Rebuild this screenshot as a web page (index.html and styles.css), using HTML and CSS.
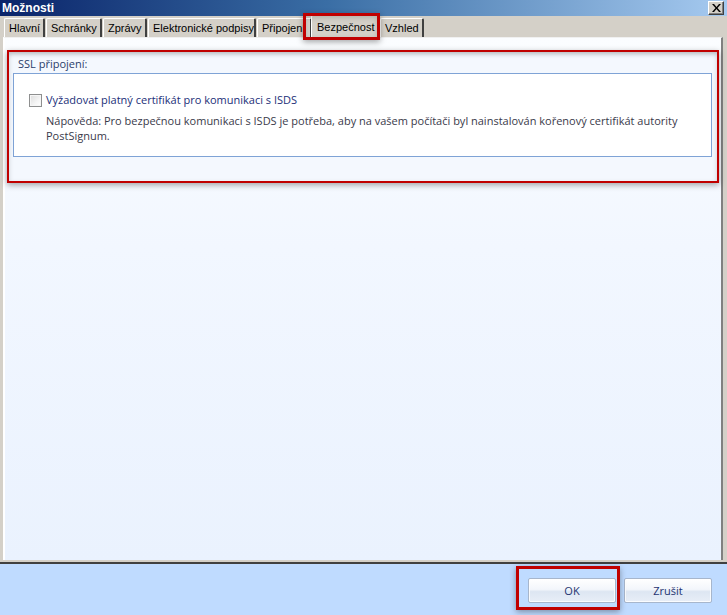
FILE: index.html
```html
<!DOCTYPE html>
<html lang="cs">
<head>
<meta charset="utf-8">
<title>Možnosti</title>
<link rel="stylesheet" href="styles.css">
</head>
<body>
<div class="window">
  <div class="titlebar">
    <span class="title">Možnosti</span>
    <span class="close">
      <svg width="9" height="8" viewBox="0 0 9 8"><path d="M0 0h2l2.5 3 2.5-3h2L5.5 4 9 8H7L4.5 5 2 8H0l3.5-4z" fill="#000"/></svg>
    </span>
  </div>
  <div class="tabs">
    <div class="tab">Hlavní</div>
    <div class="tab">Schránky</div>
    <div class="tab">Zprávy</div>
    <div class="tab">Elektronické podpisy</div>
    <div class="tab">Připojení</div>
    <div class="tab active">Bezpečnost<span class="mark mark-tab"></span></div>
    <div class="tab">Vzhled</div>
  </div>
  <div class="panel">
    <div class="group">
      <div class="group-label">SSL připojení:</div>
      <div class="group-box">
        <label class="check-row">
          <span class="checkbox"></span>
          <span class="check-text">Vyžadovat platný certifikát pro komunikaci s ISDS</span>
        </label>
        <p class="hint">Nápověda: Pro bezpečnou komunikaci s ISDS je potřeba, aby na vašem počítači byl nainstalován kořenový certifikát autority PostSignum.</p>
      </div>
      <span class="mark mark-group"></span>
    </div>
  </div>
  <div class="footer">
    <div class="btn-wrap">
      <button class="btn">OK</button>
      <span class="mark mark-btn"></span>
    </div>
    <button class="btn">Zrušit</button>
  </div>
</div>
</body>
</html>
```

FILE: styles.css
```css
html, body {
  margin: 0;
  padding: 0;
}
body {
  width: 727px;
  height: 615px;
  overflow: hidden;
  background: #d4d0c8;
  font-family: "Liberation Sans", Arial, sans-serif;
}
.window {
  display: flex;
  flex-direction: column;
  height: 615px;
}
.titlebar {
  height: 16px;
  flex: none;
  display: flex;
  align-items: center;
  justify-content: space-between;
  padding: 0 3px 0 2px;
  background: linear-gradient(to right, #0a246a 0%, #3a6ea5 45%, #a6caf0 100%);
}
.title {
  color: #fff;
  font-weight: bold;
  font-size: 12px;
  line-height: 16px;
}
.close {
  width: 16px;
  height: 14px;
  box-sizing: border-box;
  background: #d4d0c8;
  border: 1px solid;
  border-color: #fff #404040 #404040 #fff;
  box-shadow: inset -1px -1px 0 #808080;
  display: flex;
  align-items: center;
  justify-content: center;
}
.tabs {
  height: 21px;
  flex: none;
  display: flex;
  align-items: flex-end;
  padding-left: 4px;
  position: relative;
  z-index: 2;
}
.tab {
  height: 19px;
  box-sizing: border-box;
  padding: 0 4px 0 4px;
  margin-right: 1px;
  font-size: 11px;
  line-height: 18px;
  color: #000;
  background: #d4d0c8;
  border-top: 1px solid #fff;
  border-left: 1px solid #fff;
  border-right: 2px solid #404040;
  border-top-left-radius: 2px;
  border-top-right-radius: 2px;
  white-space: nowrap;
  overflow: hidden;
}
.tab:nth-child(1) { width: 41px; }
.tab:nth-child(2) { width: 56px; }
.tab:nth-child(3) { width: 44px; }
.tab:nth-child(4) { width: 108px; }
.tab:nth-child(5) { width: 55px; }
.tab.active {
  position: relative;
  overflow: visible;
  height: 24px;
  width: 69px;
  margin: 0 0 -2px -2px;
  padding: 2px 4px 0 5px;
  border-right: 2px solid #808080;
  z-index: 3;
}
.tab:nth-child(7) { width: 44px; }
.panel {
  flex: 1;
  margin: 0 4px 0 3px;
  border-top: 1px solid #f0f0f0;
  border-left: 2px solid #fff;
  border-right: 2px solid #808080;
  background: linear-gradient(to bottom, #fbfdff 0%, #f2f7ff 40%, #eaf2fe 100%);
  padding: 14px 4px 0 4px;
  position: relative;
}
.group {
  position: relative;
  background: #f4f8fe;
  padding: 4px 5px 24px 4px;
  box-shadow: inset 0 4px 4px -2px rgba(0,0,0,0.12);
}
.group-label {
  font-family: "Open Sans", "Noto Sans", sans-serif;
  font-size: 11px;
  line-height: 15px;
  color: #2b3d6b;
  padding-left: 5px;
  margin-bottom: 2px;
}
.group-box {
  height: 84px;
  box-sizing: border-box;
  border: 1px solid #7fa3d6;
  background: #fff;
  padding: 19px 10px 0 15px;
  font-family: "Open Sans", "Noto Sans", sans-serif;
  font-size: 11px;
}
.check-row {
  display: flex;
  align-items: center;
  gap: 4px;
  height: 14px;
}
.checkbox {
  width: 13px;
  height: 13px;
  box-sizing: border-box;
  border: 1px solid #8e8f8f;
  background: linear-gradient(135deg, #dcdcdc 0%, #f4f4f4 60%, #fff 100%);
  box-shadow: inset 0 0 0 1px #f6f6f6;
}
.check-text {
  color: #1b2f78;
  line-height: 14px;
}
.hint {
  margin: 6px 0 0 17px;
  color: #3a3a4a;
  line-height: 15px;
}
.footer {
  height: 55px;
  flex: none;
  background: #bfdbff;
  border-top: 2px solid #d4d0c8;
  box-shadow: inset 0 2px 0 #404040;
  padding: 16px 15px 0 0;
  box-sizing: border-box;
  display: flex;
  justify-content: flex-end;
  align-items: flex-start;
  gap: 8px;
}
.btn-wrap {
  position: relative;
}
.btn {
  display: block;
  width: 88px;
  height: 25px;
  border: 1px solid #a7b6cc;
  border-radius: 2px;
  background: linear-gradient(to bottom, #ffffff 0%, #f3f6fb 45%, #dde6f2 55%, #e8eef7 100%);
  box-shadow: inset 0 0 0 1px rgba(255,255,255,0.8);
  font-family: "Open Sans", "Noto Sans", sans-serif;
  font-size: 11px;
  color: #1e3470;
  padding: 0;
}
.mark {
  position: absolute;
  border: 3px solid #c00000;
  pointer-events: none;
  box-shadow: 0 2px 6px rgba(0,0,0,0.35), inset 0 2px 5px rgba(0,0,0,0.15);
}
.mark-tab {
  left: -9px;
  top: -3px;
  right: -2px;
  bottom: -1px;
  border-width: 3px;
}
.mark-group {
  left: -2px;
  top: -2px;
  right: -2px;
  bottom: -2px;
  border-width: 2px;
}
.mark-btn {
  left: -12px;
  top: -12px;
  right: -4px;
  bottom: -7px;
  border-width: 3px;
  box-shadow: 0 2px 6px rgba(0,0,0,0.35);
}
```
